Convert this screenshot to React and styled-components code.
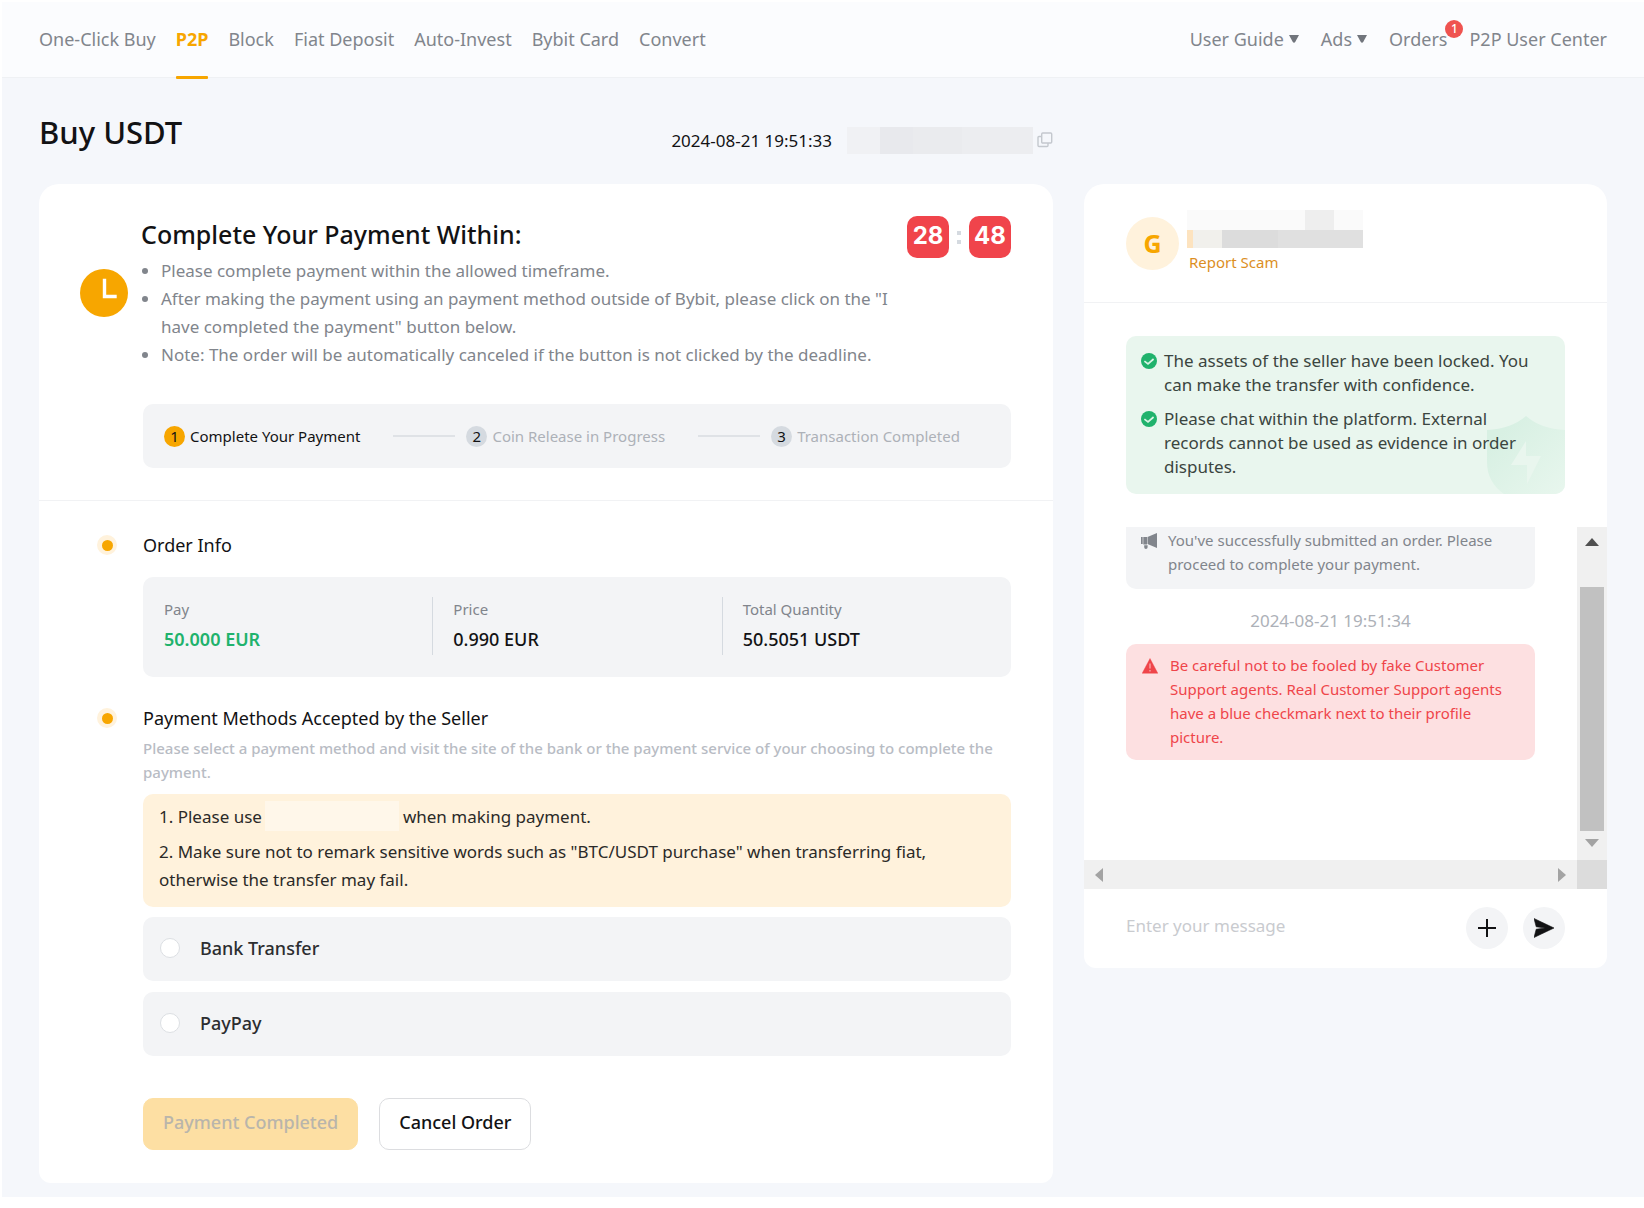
import React from "react";
import styled, { createGlobalStyle, css } from "styled-components";

const GlobalStyle = createGlobalStyle`
  *, *::before, *::after { box-sizing: border-box; }
  body {
    margin: 0;
    background: #ffffff;
    color: #121214;
    font-family: "Noto Sans", Roboto, sans-serif;
    font-size: 18px;
  }
  button, input { font: inherit; color: inherit; }
  h1, h2, h3, p, ul, ol, dl, dd { margin: 0; padding: 0; }
  a { color: inherit; text-decoration: none; }
`;

const Page = styled.div`
  margin: 2px 0 0 2px;
  padding-bottom: 14px;
  background: #f5f7fb;
`;

/* ---------- top bar ---------- */
const TopBar = styled.header`
  display: flex;
  align-items: center;
  justify-content: space-between;
  height: 76px;
  padding: 0 37px;
  background: #fbfcfe;
  border-bottom: 1px solid #eff1f4;
`;

const NavGroup = styled.nav`
  display: flex;
  align-items: center;
  gap: ${(p) => p.$gap}px;
  height: 100%;
`;

const NavLink = styled.a`
  position: relative;
  display: flex;
  align-items: center;
  gap: 5px;
  height: 100%;
  padding-bottom: 2px;
  color: #81858c;
  line-height: 24px;
  white-space: nowrap;
  ${(p) =>
    p.$active &&
    css`
      color: #f7a600;
      font-weight: 700;
      &::after {
        content: "";
        position: absolute;
        left: 0;
        right: 0;
        bottom: -2px;
        height: 3px;
        border-radius: 1px;
        background: #f7a600;
      }
    `}
`;

const Badge = styled.span`
  position: absolute;
  top: 18px;
  right: -16px;
  width: 18px;
  height: 18px;
  border-radius: 50%;
  background: #ef5350;
  color: #ffffff;
  font-size: 12px;
  font-weight: 500;
  line-height: 18px;
  text-align: center;
`;

/* ---------- page grid ---------- */
const Layout = styled.main`
  display: grid;
  grid-template-columns: minmax(0, 1fr) 523px;
  column-gap: 31px;
  padding: 0 37px;
`;

const TitleRow = styled.div`
  grid-column: 1;
  display: flex;
  align-items: flex-end;
  justify-content: space-between;
  padding: 32px 0 30px;
`;

const PageTitle = styled.h1`
  font-size: 31px;
  font-weight: 500;
  line-height: 44px;
`;

const Meta = styled.div`
  display: flex;
  align-items: center;
  height: 28px;
  font-size: 17px;
`;

const OrderIdMask = styled.span`
  width: 186px;
  height: 27px;
  margin: 0 4px 0 15px;
  background: linear-gradient(90deg, #f0f1f4 0 33px, #e8e9ed 33px 66px, #eaebee 66px 115px, #ecedf0 115px);
`;

const IconButton = styled.button`
  display: flex;
  padding: 0;
  border: 0;
  background: none;
  color: #c4c8ce;
`;

const Card = styled.section`
  align-self: start;
  overflow: hidden;
  background: #ffffff;
  border-radius: 20px 20px 12px 12px;
`;

const OrderCard = styled(Card)`
  grid-column: 1;
  padding-bottom: 33px;
`;

const ChatCard = styled(Card)`
  grid-column: 2;
`;

/* ---------- payment summary ---------- */
const Summary = styled.div`
  padding: 32px 42px 32px 41px;
  border-bottom: 1px solid #f1f2f4;
`;

const SummaryRow = styled.div`
  display: flex;
  align-items: center;
  gap: 13px;
`;

const SummaryText = styled.div`
  flex: 1;
  min-width: 0;
`;

const SummaryTitle = styled.h2`
  font-size: 25px;
  font-weight: 500;
  line-height: 36px;
`;

const Rules = styled.ul`
  margin-top: 5px;
  padding-left: 20px;
  color: #81858c;
  font-size: 17px;
  line-height: 28px;
`;

const Timer = styled.div`
  display: flex;
  align-items: center;
  align-self: flex-start;
  gap: 8px;
  color: #ffffff;
  font-family: Inter, Roboto, sans-serif;
  font-size: 24px;
  font-weight: 700;
`;

const TimerBox = styled.span`
  width: 42px;
  height: 42px;
  border-radius: 10px;
  background: #f0444b;
  line-height: 40px;
  text-align: center;
`;

const TimerDots = styled.span`
  display: grid;
  gap: 5px;
  &::before,
  &::after {
    content: "";
    width: 4px;
    height: 4px;
    background: #d5dae0;
  }
`;

const Steps = styled.ol`
  display: flex;
  align-items: center;
  height: 64px;
  margin: 35px 0 0 63px;
  padding: 0 21px;
  border-radius: 10px;
  background: #f3f4f6;
  list-style: none;
`;

const Step = styled.li`
  display: flex;
  align-items: center;
  gap: 5px;
  color: ${(p) => (p.$active ? "#121214" : "#adb1b8")};
  font-size: 15px;
  white-space: nowrap;
  &:not(:first-child)::before {
    content: "";
    width: 62px;
    height: 2px;
    margin: 0 6px 0 33px;
    background: #dfe2e6;
  }
`;

const StepNumber = styled.span`
  width: 21px;
  height: 21px;
  border-radius: 50%;
  background: ${(p) => (p.$active ? "#f7a600" : "#d5dae0")};
  color: #121214;
  line-height: 21px;
  text-align: center;
`;

/* ---------- order sections ---------- */
const SectionHead = styled.div`
  display: flex;
  align-items: center;
  gap: 26px;
  margin-top: ${(p) => p.$top}px;
  padding-left: 58px;
`;

const Marker = styled.span`
  display: grid;
  place-items: center;
  width: 20px;
  height: 20px;
  border-radius: 50%;
  background: #fff2dc;
  &::after {
    content: "";
    width: 11px;
    height: 11px;
    border-radius: 50%;
    background: #f7a600;
  }
`;

const SectionTitle = styled.h3`
  font-size: 18px;
  font-weight: 400;
  line-height: 28px;
`;

const SectionBody = styled.div`
  margin: ${(p) => p.$top}px 42px 0 104px;
`;

const InfoPanel = styled.dl`
  display: grid;
  grid-template-columns: repeat(3, 1fr);
  padding: 20px 0 22px;
  border-radius: 10px;
  background: #f3f4f6;
`;

const InfoCell = styled.div`
  padding-left: 21px;
  & + & {
    padding-left: 20px;
    border-left: 1px solid #d5dae0;
  }
`;

const InfoLabel = styled.dt`
  color: #81858c;
  font-size: 15px;
  line-height: 24px;
`;

const InfoValue = styled.dd`
  padding: 4px 0 2px;
  color: ${(p) => (p.$positive ? "#20b26c" : "#121214")};
  font-weight: ${(p) => (p.$positive ? 600 : 500)};
  line-height: 28px;
`;

const Hint = styled.p`
  margin-bottom: 10px;
  color: #b8bcc4;
  font-size: 15px;
  font-weight: 500;
  line-height: 24px;
`;

const Notice = styled.div`
  display: grid;
  gap: 7px;
  padding: 9px 16px 13px;
  border-radius: 10px;
  background: #fff2dc;
  color: #2b2a28;
  font-size: 17px;
  line-height: 28px;
`;

const NameMask = styled.span`
  display: inline-block;
  width: 134px;
  height: 30px;
  margin: -6px 4px -2px 3px;
  background: #fff7ea;
  vertical-align: middle;
`;

const Methods = styled.div`
  display: grid;
  gap: 11px;
  margin-top: 10px;
`;

const Method = styled.label`
  display: flex;
  align-items: center;
  gap: 20px;
  height: 64px;
  padding: 0 17px 2px;
  border-radius: 10px;
  background: #f3f4f6;
  color: #2c2d30;
  font-weight: 500;
`;

const Radio = styled.input`
  appearance: none;
  width: 20px;
  height: 20px;
  margin: 0;
  border: 1px solid #dcdfe3;
  border-radius: 50%;
  background: #ffffff;
  &:checked {
    border: 6px solid #f7a600;
  }
`;

const Actions = styled.div`
  display: flex;
  gap: 21px;
  margin-top: 42px;
`;

const ActionButton = styled.button`
  height: 52px;
  padding: 0 19px 4px;
  border: 1px solid ${(p) => (p.$primary ? "#fddfa3" : "#dcdde0")};
  border-radius: 10px;
  background: ${(p) => (p.$primary ? "#fddfa3" : "#ffffff")};
  color: ${(p) => (p.$primary ? "#b9b5ab" : "#121214")};
  font-weight: 500;
`;

/* ---------- chat ---------- */
const ChatHead = styled.div`
  display: flex;
  gap: 8px;
  height: 119px;
  padding: 26px 42px 0;
  border-bottom: 1px solid #f1f2f4;
`;

const Avatar = styled.div`
  width: 53px;
  height: 53px;
  margin-top: 7px;
  border-radius: 50%;
  background: #fff2dc;
  color: #f7a600;
  font-size: 25px;
  font-weight: 700;
  line-height: 53px;
  text-align: center;
`;

const SellerMask = styled.div`
  width: 176px;
  height: 38px;
  background:
    linear-gradient(90deg, #fafafa 0 118px, #eeeeee 118px 147px, #fafafa 147px) 0 0 / 100% 20px no-repeat,
    linear-gradient(90deg, #fde3bf 0 6px, #f1f0ec 6px 35px, #dcdcdc 35px 91px, #e0e0e0 91px) 0 20px / 100% 18px no-repeat;
`;

const ReportLink = styled.a`
  display: block;
  margin: 2px 0 0 2px;
  color: #dc8f1f;
  font-size: 15px;
  line-height: 24px;
`;

const SafetyBox = styled.ul`
  position: relative;
  display: grid;
  gap: 10px;
  margin: 33px 42px 33px;
  padding: 13px 16px 15px 15px;
  border-radius: 10px;
  overflow: hidden;
  background: #e9f6ee;
  color: #3b4540;
  font-size: 17px;
  line-height: 24px;
  list-style: none;
`;

const SafetyItem = styled.li`
  display: flex;
  gap: 7px;
  svg {
    flex: none;
    margin-top: 4px;
  }
`;

const ShieldMark = styled.li`
  position: absolute;
  right: 0;
  bottom: 0;
`;

const SafetyText = styled.span`
  position: relative;
  z-index: 1;
`;

const ChatLog = styled.div`
  display: grid;
  grid-template-columns: minmax(0, 1fr) 30px;
  grid-template-rows: 333px 29px;
`;

const Messages = styled.div`
  padding: 0 42px;
  font-size: 15px;
  line-height: 24px;
`;

const Bubble = styled.div`
  display: flex;
  gap: ${(p) => (p.$alert ? 12 : 10)}px;
  padding: ${(p) => (p.$alert ? "9px 30px 11px 16px" : "1px 30px 13px 15px")};
  border-radius: ${(p) => (p.$alert ? "10px" : "0 0 10px 10px")};
  background: ${(p) => (p.$alert ? "#fde0e1" : "#f3f4f6")};
  color: ${(p) => (p.$alert ? "#ef454a" : "#81858c")};
  svg {
    flex: none;
    margin-top: 5px;
  }
`;

const Stamp = styled.p`
  padding: 20px 0 11px;
  color: #adb1b8;
  font-size: 17px;
  text-align: center;
`;

const ScrollTrack = styled.div`
  display: flex;
  flex-direction: ${(p) => (p.$vertical ? "column" : "row")};
  align-items: center;
  justify-content: space-between;
  padding: ${(p) => (p.$vertical ? "11px 3px 13px" : "0 11px")};
  background: #f0f0f0;
`;

const ScrollThumb = styled.div`
  width: 24px;
  height: 244px;
  margin-top: 32px;
  background: #c1c1c1;
`;

const ScrollCorner = styled.div`
  background: #dcdcdc;
`;

const Composer = styled.form`
  display: flex;
  align-items: center;
  gap: 15px;
  height: 79px;
  padding: 0 42px 2px;
`;

const MessageInput = styled.input`
  flex: 1;
  min-width: 0;
  height: 32px;
  padding: 0 0 4px;
  border: 0;
  outline: 0;
  background: none;
  font-size: 17px;
  &::placeholder {
    color: #c9cbcf;
    opacity: 1;
  }
`;

const RoundButton = styled.button`
  display: grid;
  place-items: center;
  width: 42px;
  height: 42px;
  padding: 0;
  border: 0;
  border-radius: 50%;
  background: #f3f4f6;
  color: #121214;
`;

/* ---------- drawings ---------- */
const Caret = () => (
  <svg width="10" height="8" viewBox="0 0 10 8" aria-hidden="true">
    <path d="M0 0h10L6.2 7a1.4 1.4 0 0 1-2.4 0z" fill="#71757c" />
  </svg>
);

const CopyIcon = () => (
  <svg width="16" height="16" viewBox="0 0 16 16" fill="none" stroke="currentColor" strokeWidth="1.4" aria-hidden="true">
    <rect x="4.7" y="1" width="10" height="10" rx="1" />
    <path d="M4.5 4.5H2a1 1 0 0 0-1 1v8a1 1 0 0 0 1 1h8a1 1 0 0 0 1-1V11" />
  </svg>
);

const ClockIcon = () => (
  <svg width="48" height="48" viewBox="0 0 48 48" aria-hidden="true">
    <circle cx="24" cy="24" r="24" fill="#f7a600" />
    <path d="M24.5 11.5v16H35" fill="none" stroke="#ffffff" strokeWidth="3.4" strokeLinecap="square" />
  </svg>
);

const CheckIcon = () => (
  <svg width="16" height="16" viewBox="0 0 16 16" aria-hidden="true">
    <circle cx="8" cy="8" r="8" fill="#20b26c" />
    <path d="M3.4 8.2L7 11l5.600-5" fill="none" stroke="#d9f3e5" strokeWidth="1.7" />
  </svg>
);

const HornIcon = () => (
  <svg width="17" height="16" viewBox="0 0 17 16" fill="#81858c" aria-hidden="true">
    <path d="M0 4h1.7v7H0zM2.300 4H6v7.500H2.300zM6.500 4L16 0v15l-9.500-4zM3.200 12.300h3.400v2a1.700 1.700 0 0 1-3.400 0z" />
  </svg>
);

const WarnIcon = () => (
  <svg width="16" height="16" viewBox="0 0 16 16" aria-hidden="true">
    <path d="M8 .5l7.800 14.800H.2z" fill="#ef454a" stroke="#ef454a" strokeWidth="0.4" strokeLinejoin="round" />
    <path d="M8 5.500v5M8 12v1.600" stroke="#f9b5b7" strokeWidth="1.200" />
  </svg>
);

const PlusIcon = () => (
  <svg width="18" height="18" viewBox="0 0 18 18" fill="none" stroke="currentColor" strokeWidth="2" aria-hidden="true">
    <path d="M9 0v18M0 9h18" />
  </svg>
);

const SendIcon = () => (
  <svg width="20" height="20" viewBox="0 0 20 20" aria-hidden="true">
    <path d="M0 0.500L20 10 0 19.500l2.200-8.300L11 10 2.200 8.800z" fill="currentColor" stroke="currentColor" strokeWidth="0.600" strokeLinejoin="round" />
  </svg>
);

const Arrow = ({ dir, color }) => {
  const shapes = {
    up: [14, 8, "M7 0l7 8H0z"],
    down: [14, 8, "M7 8l7-8H0z"],
    left: [8, 14, "M0 7l8-7v14z"],
    right: [8, 14, "M8 7L0 0v14z"],
  };
  const [w, h, d] = shapes[dir];
  return (
    <svg width={w} height={h} viewBox={`0 0 ${w} ${h}`} aria-hidden="true">
      <path d={d} fill={color} />
    </svg>
  );
};

/* ---------- data ---------- */
const products = ["One-Click Buy", "P2P", "Block", "Fiat Deposit", "Auto-Invest", "Bybit Card", "Convert"];

const rules = [
  "Please complete payment within the allowed timeframe.",
  'After making the payment using an payment method outside of Bybit, please click on the "I have completed the payment" button below.',
  "Note: The order will be automatically canceled if the button is not clicked by the deadline.",
];

const steps = ["Complete Your Payment", "Coin Release in Progress", "Transaction Completed"];

const orderInfo = [
  { label: "Pay", value: "50.000 EUR", positive: true },
  { label: "Price", value: "0.990 EUR" },
  { label: "Total Quantity", value: "50.5051 USDT" },
];

const methods = ["Bank Transfer", "PayPay"];

const safetyNotes = [
  "The assets of the seller have been locked. You can make the transfer with confidence.",
  "Please chat within the platform. External records cannot be used as evidence in order disputes.",
];

export default function App() {
  return (
    <>
      <GlobalStyle />
      <Page>
        <TopBar>
          <NavGroup $gap={20}>
            {products.map((name) => (
              <NavLink key={name} href="#" $active={name === "P2P"}>
                {name}
              </NavLink>
            ))}
          </NavGroup>
          <NavGroup $gap={22}>
            <NavLink href="#">
              User Guide <Caret />
            </NavLink>
            <NavLink href="#">
              Ads <Caret />
            </NavLink>
            <NavLink href="#">
              Orders <Badge>1</Badge>
            </NavLink>
            <NavLink href="#">P2P User Center</NavLink>
          </NavGroup>
        </TopBar>

        <Layout>
          <TitleRow>
            <PageTitle>Buy USDT</PageTitle>
            <Meta>
              <time>2024-08-21 19:51:33</time>
              <OrderIdMask />
              <IconButton type="button" aria-label="Copy order number">
                <CopyIcon />
              </IconButton>
            </Meta>
          </TitleRow>

          <OrderCard>
            <Summary>
              <SummaryRow>
                <ClockIcon />
                <SummaryText>
                  <SummaryTitle>Complete Your Payment Within:</SummaryTitle>
                  <Rules>
                    {rules.map((rule) => (
                      <li key={rule}>{rule}</li>
                    ))}
                  </Rules>
                </SummaryText>
                <Timer>
                  <TimerBox>28</TimerBox>
                  <TimerDots />
                  <TimerBox>48</TimerBox>
                </Timer>
              </SummaryRow>
              <Steps>
                {steps.map((step, i) => (
                  <Step key={step} $active={i === 0}>
                    <StepNumber $active={i === 0}>{i + 1}</StepNumber>
                    {step}
                  </Step>
                ))}
              </Steps>
            </Summary>

            <SectionHead $top={30}>
              <Marker />
              <SectionTitle>Order Info</SectionTitle>
            </SectionHead>
            <SectionBody $top={18}>
              <InfoPanel>
                {orderInfo.map((item) => (
                  <InfoCell key={item.label}>
                    <InfoLabel>{item.label}</InfoLabel>
                    <InfoValue $positive={item.positive}>{item.value}</InfoValue>
                  </InfoCell>
                ))}
              </InfoPanel>
            </SectionBody>

            <SectionHead $top={27}>
              <Marker />
              <SectionTitle>Payment Methods Accepted by the Seller</SectionTitle>
            </SectionHead>
            <SectionBody $top={4}>
              <Hint>
                Please select a payment method and visit the site of the bank or the payment service of your choosing to
                complete the payment.
              </Hint>
              <Notice>
                <p>
                  1. Please use
                  <NameMask />
                  when making payment.
                </p>
                <p>
                  2. Make sure not to remark sensitive words such as "BTC/USDT purchase" when transferring fiat,
                  otherwise the transfer may fail.
                </p>
              </Notice>
              <Methods>
                {methods.map((name) => (
                  <Method key={name}>
                    <Radio type="radio" name="method" />
                    {name}
                  </Method>
                ))}
              </Methods>
              <Actions>
                <ActionButton type="button" disabled $primary>
                  Payment Completed
                </ActionButton>
                <ActionButton type="button">Cancel Order</ActionButton>
              </Actions>
            </SectionBody>
          </OrderCard>

          <ChatCard>
            <ChatHead>
              <Avatar>G</Avatar>
              <div>
                <SellerMask />
                <ReportLink href="#">Report Scam</ReportLink>
              </div>
            </ChatHead>
            <SafetyBox>
              {safetyNotes.map((note) => (
                <SafetyItem key={note}>
                  <CheckIcon />
                  <SafetyText>{note}</SafetyText>
                </SafetyItem>
              ))}
              <ShieldMark aria-hidden="true">
                <svg width="78" height="78" viewBox="0 0 78 78" display="block">
                  <defs>
                    <linearGradient id="shield" x1="0" y1="0" x2="1" y2="1">
                      <stop offset="0.2" stopColor="#d8f0e3" />
                      <stop offset="0.95" stopColor="#e7f6ed" />
                    </linearGradient>
                  </defs>
                  <path d="M0 14Q24 13 39 0q15 13 39 14v64H17Q0 66 0 46z" fill="url(#shield)" />
                  <path d="M39 25v15h15L40 68V49H24z" fill="#e9f6ee" />
                </svg>
              </ShieldMark>
            </SafetyBox>
            <ChatLog>
              <Messages>
                <Bubble>
                  <HornIcon />
                  <p>You've successfully submitted an order. Please proceed to complete your payment.</p>
                </Bubble>
                <Stamp>2024-08-21 19:51:34</Stamp>
                <Bubble $alert>
                  <WarnIcon />
                  <p>
                    Be careful not to be fooled by fake Customer Support agents. Real Customer Support agents have a
                    blue checkmark next to their profile picture.
                  </p>
                </Bubble>
              </Messages>
              <ScrollTrack $vertical>
                <Arrow dir="up" color="#505050" />
                <ScrollThumb />
                <Arrow dir="down" color="#a3a3a3" />
              </ScrollTrack>
              <ScrollTrack>
                <Arrow dir="left" color="#a3a3a3" />
                <Arrow dir="right" color="#a3a3a3" />
              </ScrollTrack>
              <ScrollCorner />
            </ChatLog>
            <Composer>
              <MessageInput type="text" placeholder="Enter your message" aria-label="Enter your message" />
              <RoundButton type="button" aria-label="Add attachment">
                <PlusIcon />
              </RoundButton>
              <RoundButton type="button" aria-label="Send">
                <SendIcon />
              </RoundButton>
            </Composer>
          </ChatCard>
        </Layout>
      </Page>
    </>
  );
}
